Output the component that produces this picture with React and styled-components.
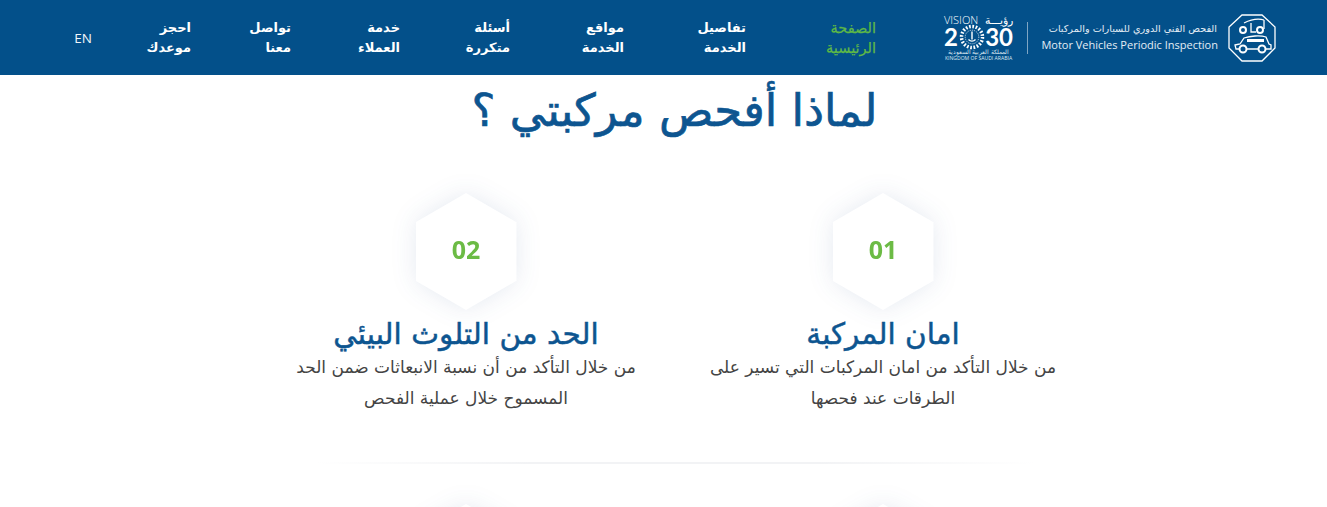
import React from "react";
import styled, { createGlobalStyle } from "styled-components";

const NAV_ITEMS = [
  { first: "الصفحة", second: "الرئيسية", width: 130, active: true },
  { first: "تفاصيل", second: "الخدمة", width: 122 },
  { first: "مواقع", second: "الخدمة", width: 114 },
  { first: "أسئلة", second: "متكررة", width: 110 },
  { first: "خدمة", second: "العملاء", width: 109 },
  { first: "تواصل", second: "معنا", width: 100 },
  { first: "احجز", second: "موعدك", width: 99 },
];

const FEATURES = [
  {
    number: "01",
    title: "امان المركبة",
    lines: ["من خلال التأكد من امان المركبات التي تسير على", "الطرقات عند فحصها"],
  },
  {
    number: "02",
    title: "الحد من التلوث البيئي",
    lines: ["من خلال التأكد من أن نسبة الانبعاثات ضمن الحد", "المسموح خلال عملية الفحص"],
  },
];

const GlobalStyle = createGlobalStyle`
  html, body {
    margin: 0;
    padding: 0;
    background: #fff;
    overflow: hidden;
    font-family: "DejaVu Sans", "Noto Sans", sans-serif;
  }
`;

const Page = styled.div`
  direction: rtl;
  width: 1327px;
  height: 507px;
  overflow: hidden;
`;

const Header = styled.header`
  height: 75px;
  background: #03508a;
  display: flex;
  align-items: center;
  padding-right: 51px;
  color: #fff;
`;

const Brand = styled.div`
  display: flex;
  align-items: center;
  width: 400px;
  flex: none;
`;

const BrandText = styled.div`
  display: flex;
  flex-direction: column;
  align-items: flex-start;
  margin-right: 10px;
  width: 179px;
  flex: none;
  color: #e3edf5;
`;

const BrandArabic = styled.span`
  font-size: 9.7px;
  line-height: 14px;
  white-space: nowrap;
  margin-right: 1px;
`;

const BrandLatin = styled.span`
  direction: ltr;
  font-family: "Open Sans", sans-serif;
  font-size: 11px;
  line-height: 18px;
  white-space: nowrap;
`;

const Separator = styled.div`
  width: 1px;
  height: 32px;
  background: #7fa6c4;
  flex: none;
  margin-right: 11px;
`;

const Vision = styled.div`
  direction: ltr;
  width: 69px;
  flex: none;
  display: flex;
  flex-direction: column;
  margin-right: 14px;
  align-items: center;
  color: #fff;
  font-family: "Open Sans", sans-serif;
`;

const VisionTop = styled.div`
  width: 100%;
  display: flex;
  justify-content: space-between;
  font-size: 11px;
  line-height: 11px;
  font-weight: 300;
`;

const VisionYear = styled.div`
  width: 100%;
  height: 24px;
  display: flex;
  align-items: center;
  justify-content: space-between;
  font-family: "Lato", sans-serif;
  font-size: 24px;
  line-height: 24px;
  font-weight: 700;
`;

const VisionSmall = styled.div`
  font-size: ${({ $size }) => $size}px;
  line-height: 6px;
  white-space: nowrap;
  color: #dce8f1;
`;

const Nav = styled.nav`
  display: flex;
  align-items: center;
`;

const NavItem = styled.a`
  flex: none;
  width: ${({ $width }) => $width}px;
  box-sizing: border-box;
  color: ${({ $active }) => ($active ? "#5fb946" : "#fff")};
  font-size: ${({ $active }) => ($active ? 14.5 : 13)}px;
  font-weight: ${({ $active }) => ($active ? 400 : 700)};
  -webkit-text-stroke: ${({ $active }) => ($active ? "0.25px #5fb946" : "0")};
  line-height: 20px;
  text-align: right;
  white-space: nowrap;
`;

const Lang = styled.a`
  direction: ltr;
  font-family: "Open Sans", sans-serif;
  font-size: 13.5px;
  color: #f2f6fa;
`;

const Main = styled.main`
  display: flex;
  flex-direction: column;
  align-items: center;
  padding-left: 22px;
`;

const Title = styled.h1`
  margin: 11px 0 0;
  font-size: 45px;
  line-height: 50px;
  font-weight: 400;
  color: #0d5590;
  -webkit-text-stroke: 0.7px #0d5590;
  text-align: center;
  white-space: nowrap;
`;

const Features = styled.section`
  display: flex;
  justify-content: center;
  gap: 50px;
  margin-top: 57px;
`;

const Feature = styled.article`
  width: 367px;
  display: flex;
  flex-direction: column;
  align-items: center;
`;

const HexShadow = styled.div`
  filter: drop-shadow(0 0 12px rgba(30, 60, 130, 0.11));
`;

const Hexagon = styled.div`
  width: 101px;
  height: 117px;
  box-sizing: border-box;
  padding-bottom: 6px;
  background: #fff;
  clip-path: polygon(50% 0, 100% 25%, 100% 75%, 50% 100%, 0 75%, 0 25%);
  display: flex;
  align-items: center;
  justify-content: center;
  font-family: "Open Sans", sans-serif;
  font-size: 25px;
  font-weight: 700;
  color: #6cbb45;
`;

const FeatureTitle = styled.h2`
  margin: 6px 0 0;
  font-size: 29.5px;
  line-height: 36px;
  font-weight: 400;
  color: #0d5590;
  -webkit-text-stroke: 0.5px #0d5590;
  white-space: nowrap;
`;

const FeatureLine = styled.p`
  margin: 0;
  font-size: 17px;
  line-height: 31px;
  color: #444;
  white-space: nowrap;
`;

const Divider = styled.div`
  width: 720px;
  height: 2px;
  margin-top: 48px;
  background: linear-gradient(to right, rgba(240, 241, 243, 0), #f2f3f5 30%, #f2f3f5 70%, rgba(240, 241, 243, 0));
`;

const NextHexagons = styled.div`
  display: flex;
  justify-content: center;
  gap: 316px;
  margin-top: 40px;
`;

const Logo = () => (
  <svg width="48" height="48" viewBox="0 0 48 48" fill="none" stroke="#fff" strokeWidth="1.3" style={{ flex: "none" }}>
    <polygon points="14,1 34,1 47,13 47,34 34,47 14,47 1,34 1,13" />
    <circle cx="15" cy="16" r="3" strokeWidth="2" />
    <circle cx="32" cy="16" r="3" strokeWidth="2" />
    <path d="M23 9v9h5M16 9c6-3 13-5 20-3M36 6v9" />
    <path d="M7 31l5-1 4-6c6-2 16-3 22-1l3 7 2 1v4H8z" />
    <path d="M19 25h17v3H19z" fill="#fff" stroke="none" />
    <circle cx="15" cy="35" r="3.5" fill="#03508a" strokeWidth="2" />
    <circle cx="34" cy="35" r="3.5" fill="#03508a" strokeWidth="2" />
  </svg>
);

const Emblem = () => (
  <svg width="26" height="26" viewBox="0 0 26 26" fill="none" stroke="#fff" style={{ flex: "none" }}>
    <circle cx="13" cy="13" r="10.5" strokeWidth="3.5" strokeDasharray="1.7 1.6" />
    <circle cx="13" cy="13" r="6.8" strokeWidth="0.8" strokeDasharray="1 1" />
    <path d="M13 7.5v8M9.5 15.5c2 2 5 2 7 0" strokeWidth="1.4" />
  </svg>
);

export default function App() {
  return (
    <Page>
      <GlobalStyle />
      <Header>
        <Brand>
          <Logo />
          <BrandText>
            <BrandArabic>الفحص الفني الدوري للسيارات والمركبات</BrandArabic>
            <BrandLatin>Motor Vehicles Periodic Inspection</BrandLatin>
          </BrandText>
          <Separator />
          <Vision>
            <VisionTop>
              <span>VISION</span>
              <span>رؤيـــة</span>
            </VisionTop>
            <VisionYear>
              <span>2</span>
              <Emblem />
              <span>30</span>
            </VisionYear>
            <VisionSmall $size={6.2}>المملكة العربية السعودية</VisionSmall>
            <VisionSmall $size={5.1}>KINGDOM OF SAUDI ARABIA</VisionSmall>
          </Vision>
        </Brand>
        <Nav>
          {NAV_ITEMS.map((item) => (
            <NavItem key={item.first} $width={item.width} $active={item.active}>
              {item.first}
              <br />
              {item.second}
            </NavItem>
          ))}
        </Nav>
        <Lang>EN</Lang>
      </Header>
      <Main>
        <Title>لماذا أفحص مركبتي ؟</Title>
        <Features>
          {FEATURES.map((feature) => (
            <Feature key={feature.number}>
              <HexShadow>
                <Hexagon>{feature.number}</Hexagon>
              </HexShadow>
              <FeatureTitle>{feature.title}</FeatureTitle>
              {feature.lines.map((line) => (
                <FeatureLine key={line}>{line}</FeatureLine>
              ))}
            </Feature>
          ))}
        </Features>
        <Divider />
        <NextHexagons>
          <HexShadow>
            <Hexagon />
          </HexShadow>
          <HexShadow>
            <Hexagon />
          </HexShadow>
        </NextHexagons>
      </Main>
    </Page>
  );
}
